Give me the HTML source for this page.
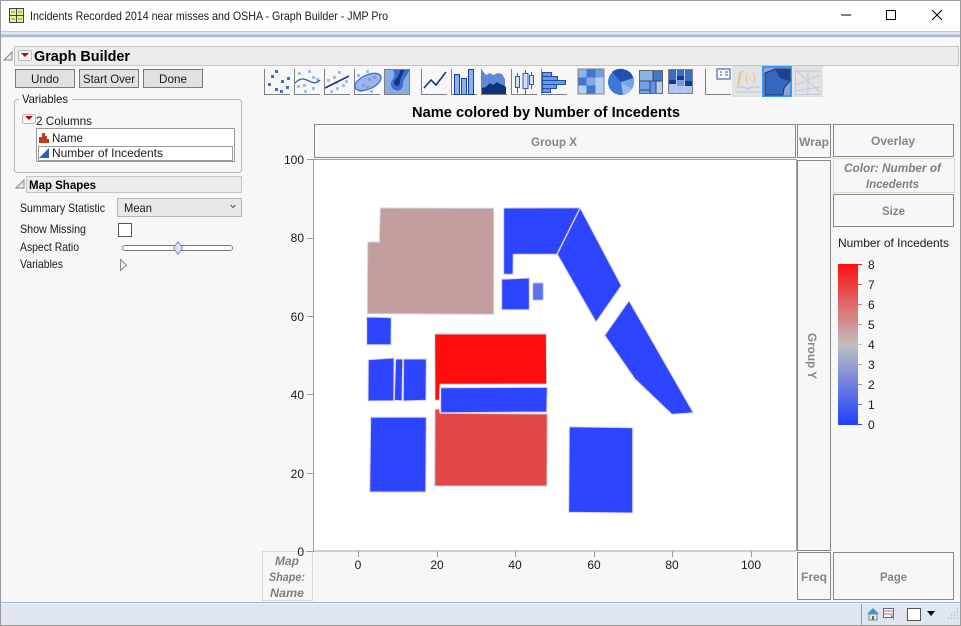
<!DOCTYPE html>
<html><head><meta charset="utf-8"><title>Graph Builder</title>
<style>
html,body{margin:0;padding:0;background:#f7f7f7;width:961px;height:626px;overflow:hidden}
svg{display:block}
text{font-family:"Liberation Sans",sans-serif;font-size:12px;fill:#1a1a1a}
.b{font-weight:bold}
.g{fill:#858585;font-weight:bold}
.gi{fill:#808080;font-weight:bold;font-style:italic}
.box{fill:#f7f7f7;stroke:#888;stroke-width:1}
.bge{fill:#f7f7f7;stroke:#dcdccb;stroke-width:1}
.btn{fill:#e1e1e1;stroke:#7a7a7a;stroke-width:1}
.ax{stroke:#8a8a8a;stroke-width:1;fill:none}
.s{stroke:#d6d6e2;stroke-width:1}
.bl{fill:#2e45ff}
</style></head><body>
<svg width="961" height="626" viewBox="0 0 961 626" xmlns="http://www.w3.org/2000/svg">
<rect width="961" height="626" fill="#f7f7f7"/>
<!-- title bar -->
<rect x="0" y="1" width="961" height="30" fill="#fff"/>
<rect x="0" y="31" width="961" height="1" fill="#bccbdc"/>
<rect x="0" y="32" width="961" height="2" fill="#dfe7f0"/>
<rect x="0" y="34" width="961" height="1" fill="#c5d3e2"/>
<rect x="0" y="35" width="961" height="2" fill="#a9bdd2"/>
<rect x="0" y="37" width="961" height="1" fill="#e6ecf2"/>
<rect x="9.500" y="8.500" width="14" height="14" fill="#e6ec9a" stroke="#444"/>
<path d="M16.500 8v15M9 15.500h15" stroke="#444" fill="none"/>
<path d="M12 11v2M14 11v2M19 11v2M21 11v2M12 18v2M14 18v2M19 18v2M21 18v2" stroke="#7f9a3c" fill="none"/>
<text x="30" y="20" textLength="358" lengthAdjust="spacingAndGlyphs">Incidents Recorded 2014 near misses and OSHA - Graph Builder - JMP Pro</text>
<path d="M841 15h10" stroke="#000" stroke-width="1"/>
<rect x="886.500" y="10.500" width="9" height="9" fill="none" stroke="#000"/>
<path d="M932 10l10 10M942 10l-10 10" stroke="#000" stroke-width="1"/>
<!-- header -->
<rect x="14.500" y="46.500" width="944" height="19" fill="#ececec" stroke="#c4c4c4"/>
<path d="M4 60l8-8v8z" fill="#e8e8e8" stroke="#888"/>
<rect x="18.500" y="50.500" width="13" height="10" rx="2" fill="#f6f6f6" stroke="#b8b8b8"/>
<path d="M21 53h8l-4 4z" fill="#c80000"/>
<text x="34" y="61" class="b" style="font-size:14.500px;fill:#000" textLength="96" lengthAdjust="spacingAndGlyphs">Graph Builder</text>
<!-- buttons -->
<rect class="btn" x="15.500" y="69.500" width="59" height="18"/>
<rect class="btn" x="79.500" y="69.500" width="59" height="18"/>
<rect class="btn" x="143.500" y="69.500" width="59" height="18"/>
<text x="31" y="83" textLength="28" lengthAdjust="spacingAndGlyphs">Undo</text>
<text x="83" y="83" textLength="52" lengthAdjust="spacingAndGlyphs">Start Over</text>
<text x="159" y="83" textLength="28" lengthAdjust="spacingAndGlyphs">Done</text>
<!-- variables -->
<rect x="14.500" y="99.500" width="227" height="73" rx="3" fill="#f7f7f7" stroke="#b5b5b5"/>
<rect x="19" y="95" width="53" height="9" fill="#f7f7f7"/>
<text x="22" y="103" textLength="46" lengthAdjust="spacingAndGlyphs">Variables</text>
<rect x="22.500" y="114.500" width="13" height="9" rx="2" fill="#f6f6f6" stroke="#b8b8b8"/>
<path d="M25 116h8l-4 4z" fill="#c80000"/>
<text x="36" y="125" textLength="56" lengthAdjust="spacingAndGlyphs">2 Columns</text>
<rect x="36.500" y="128.500" width="198" height="33" fill="#fff" stroke="#999"/>
<rect x="38.500" y="146.500" width="194" height="14" fill="none" stroke="#333" stroke-dasharray="1 1" shape-rendering="crispEdges"/>
<path d="M39 143v-6h3v-4h3v3h2v3h2v4z" fill="#c8381c"/>
<text x="52" y="142" textLength="31" lengthAdjust="spacingAndGlyphs">Name</text>
<path d="M39 158l10-10v10z" fill="#2f5fb3"/>
<text x="52" y="157" textLength="111" lengthAdjust="spacingAndGlyphs">Number of Incedents</text>
<!-- map shapes -->
<path d="M16 188l8-8v8z" fill="#e8e8e8" stroke="#888"/>
<rect x="26.500" y="176.500" width="215" height="16" fill="#ececec" stroke="#c4c4c4"/>
<text x="29" y="189" class="b" style="fill:#000" textLength="67" lengthAdjust="spacingAndGlyphs">Map Shapes</text>
<text x="20" y="212" textLength="85" lengthAdjust="spacingAndGlyphs">Summary Statistic</text>
<rect x="117.500" y="198.500" width="124" height="18" fill="#e8e8e8" stroke="#b5b5b5"/>
<text x="124" y="212" textLength="28" lengthAdjust="spacingAndGlyphs">Mean</text>
<path d="M230.500 205l2.500 2.500 2.500-2.500" fill="none" stroke="#555"/>
<text x="20" y="233" textLength="66" lengthAdjust="spacingAndGlyphs">Show Missing</text>
<rect x="118.500" y="223.500" width="13" height="13" fill="#fff" stroke="#555"/>
<text x="20" y="251" textLength="59" lengthAdjust="spacingAndGlyphs">Aspect Ratio</text>
<rect x="122.500" y="245.500" width="110" height="5" rx="2.500" fill="#fff" stroke="#777"/>
<path d="M178 241.500l4.500 6.500-4.500 6.500-4.500-6.500z" fill="#d3e2f3" stroke="#7b96b8"/>
<text x="20" y="268" textLength="43" lengthAdjust="spacingAndGlyphs">Variables</text>
<path d="M120.500 259.500l6 5.500-6 5.500z" fill="#f2f2f2" stroke="#888"/>
<!-- toolbar grey group -->
<rect x="732" y="66" width="91" height="31" fill="#e2e2e2"/>
<!-- axis-L icons -->
<path d="M264.500 69v25.500H290M294.500 69v25.500H320M324.500 69v25.500H350M354.500 69v25.500H380M421.500 69v25.500H447M451.500 69v25.500H477M481.500 69v25.500H507M511.500 69v25.500H537M541.500 69v25.500H567M705.500 69v25.500H731" fill="none" stroke="#808080"/>
<!-- icon 1 -->
<g fill="#3f70c4"><rect x="275" y="70" width="3" height="3"/><rect x="271" y="75" width="3" height="3"/><rect x="268" y="83" width="3" height="3"/><rect x="281" y="80" width="3" height="3"/><rect x="287" y="77" width="3" height="3"/><rect x="275" y="88" width="3" height="3"/><rect x="280" y="90" width="3" height="3"/><rect x="286" y="86" width="3" height="3"/></g>
<!-- icon 2 -->
<g fill="#a6bde4"><rect x="298" y="72" width="3" height="3"/><rect x="308" y="70" width="3" height="3"/><rect x="312" y="76" width="3" height="3"/><rect x="316" y="78" width="3" height="3"/><rect x="297" y="85" width="3" height="3"/><rect x="303" y="84" width="3" height="3"/><rect x="304" y="90" width="3" height="3"/><rect x="312" y="87" width="3" height="3"/></g>
<path d="M295 83c6-6 10-4 14-2s7 3 11-1" fill="none" stroke="#3560ad" stroke-width="1.300"/>
<!-- icon 3 -->
<g fill="#a6bde4"><rect x="327" y="79" width="3" height="3"/><rect x="333" y="76" width="3" height="3"/><rect x="338" y="71" width="3" height="3"/><rect x="335" y="81" width="3" height="3"/><rect x="345" y="80" width="3" height="3"/><rect x="330" y="90" width="3" height="3"/><rect x="336" y="87" width="3" height="3"/><rect x="342" y="84" width="3" height="3"/></g>
<path d="M325 88l24-12" stroke="#0c3a98" stroke-width="1.600" fill="none"/>
<!-- icon 4 -->
<g fill="#a6bde4"><rect x="357" y="74" width="3" height="3"/><rect x="366" y="70" width="3" height="3"/><rect x="359" y="89" width="3" height="3"/><rect x="370" y="90" width="3" height="3"/></g>
<ellipse cx="368" cy="82" rx="14" ry="7" transform="rotate(-25 368 82)" fill="#9bb6ea" stroke="#3f6fd4" stroke-width="1.300"/>
<g fill="#7f9dd8"><rect x="362" y="84" width="3" height="3"/><rect x="368" y="78" width="3" height="3"/><rect x="373" y="76" width="3" height="3"/><rect x="366" y="86" width="3" height="3"/></g>
<!-- icon 5 -->
<rect x="384.500" y="69.500" width="25" height="25" fill="#86ace9" stroke="#808080"/>
<path d="M393 70h16v1c-2 5-6 8-6 13 0 5-4 8-8 6-5-2-5-8-2-11 2-3 2-5 0-9z" fill="#3c6cc8"/>
<path d="M400 70h4c-1 5-4 8-4 12 0 4-3 5-5 3s-1-5 2-7c2-3 3-5 3-8z" fill="#0f3a80"/>
<!-- icon 6 -->
<path d="M424 88l7-8 5 5 10-13" fill="none" stroke="#0d3a9a" stroke-width="1.600"/>
<!-- icon 7 -->
<g fill="#8cb0ee" stroke="#173f9f"><rect x="454.500" y="74.500" width="5" height="20"/><rect x="461.500" y="78.500" width="5" height="16"/><rect x="468.500" y="69.500" width="5" height="25"/></g>
<!-- icon 8 -->
<path d="M482 70l4 5 4-2 3 2 5-2 4 1 3 5v15h-23z" fill="#5f8bd3"/>
<path d="M482 88l4-1 4-4 3 2 4-3 3 2 3 1 3 2v7h-24z" fill="#0d337f"/>
<!-- icon 9 -->
<g fill="#cfe0fa" stroke="#355ca8"><path d="M517.500 73v20M525.500 70v24M531.500 72v17" fill="none"/><rect x="515.500" y="76.500" width="4" height="11"/><rect x="523" y="73.500" width="5" height="15"/><rect x="529.500" y="75.500" width="4" height="9"/></g>
<!-- icon 10 -->
<g fill="#6a99e6" stroke="#204ea8"><rect x="542.500" y="72.500" width="9" height="4"/><rect x="542.500" y="76.500" width="15" height="4"/><rect x="542.500" y="80.500" width="23" height="4"/><rect x="542.500" y="84.500" width="14" height="4"/><rect x="542.500" y="88.500" width="8" height="4"/></g>
<!-- icon 11 -->
<rect x="578" y="69" width="26" height="25" fill="#6f9ce0" stroke="#808080"/>
<rect x="578.500" y="69.500" width="8" height="8" fill="#8eb0e8"/><rect x="586.500" y="69.500" width="9" height="8" fill="#3f76cf"/><rect x="578.500" y="77.500" width="8" height="8" fill="#3f76cf"/><rect x="586.500" y="77.500" width="9" height="8" fill="#85a8e6"/><rect x="595.500" y="77.500" width="8" height="8" fill="#b5cdf5"/><rect x="578.500" y="85.500" width="8" height="8" fill="#b5cdf5"/><rect x="586.500" y="85.500" width="9" height="8" fill="#3f76cf"/><rect x="595.500" y="85.500" width="8" height="8" fill="#b5cdf5"/>
<!-- icon 12 -->
<circle cx="621" cy="82" r="13" fill="#3b78d8"/>
<path d="M621 82l4-12.400a13 13 0 0 1 8.500 8.500z" fill="#1f51b0"/>
<path d="M612 72a13 13 0 0 1 13-2.400l-4 12.400z" fill="#1f51b0"/>
<path d="M621 82l12.500-4a13 13 0 0 1-1.500 11z" fill="#6fa7e4"/>
<path d="M621 82l11 7a13 13 0 0 1-9 6z" fill="#95bdf0"/>
<!-- icon 13 -->
<rect x="639.500" y="70.500" width="23" height="23" fill="#8fb0e8" stroke="#666"/>
<rect x="653" y="71" width="9" height="10" fill="#3b78d8"/>
<rect x="640" y="81" width="10" height="12" fill="#6fa3f0"/><rect x="650" y="81" width="6" height="12" fill="#5f95ec"/><rect x="656" y="81" width="6" height="12" fill="#b5cdf5"/>
<path d="M640 81h22M653 71v10M650 81v12M656 81v12M640 90h10" stroke="#444" fill="none"/>
<!-- icon 14 -->
<rect x="668.500" y="69.500" width="24" height="24" fill="#a9c5f3" stroke="#808080"/>
<rect x="669" y="70" width="7" height="10" fill="#3570c8"/><rect x="669" y="80" width="7" height="4" fill="#0f3a9a"/>
<rect x="677" y="70" width="7" height="6" fill="#3570c8"/><rect x="677" y="76" width="7" height="4" fill="#0f3a9a"/><rect x="677" y="80" width="7" height="6" fill="#6e9ae2"/>
<rect x="685" y="70" width="7" height="12" fill="#3570c8"/><rect x="685" y="81" width="7" height="5" fill="#0f3a9a"/>
<path d="M676.500 70v23M684.500 70v23" stroke="#ccd" fill="none"/>
<!-- icon 15 -->
<rect x="717" y="69" width="13" height="10" fill="#fff" stroke="#2848a8"/>
<path d="M720 72h2M720 75h2M725 72h3M725 75h3" stroke="#2848a8" fill="none"/>
<!-- icon 16 -->
<text x="737" y="82" style="font-family:'Liberation Serif',serif;font-size:16px;font-style:italic;fill:#dcc98e;font-weight:bold">f</text>
<text x="745" y="81" style="font-size:11px;fill:#dcc98e">(·)</text>
<path d="M736 88c5-4 9 2 14 0s7-1 10 0M736 92h25" fill="none" stroke="#b5c5d8"/>
<!-- icon 17 -->
<rect x="762" y="66" width="30" height="31" fill="#39f"/>
<rect x="764" y="68" width="26" height="27" fill="#8ea6cf"/>
<path d="M765 73l10-4h15v12l-6 7-1 7h-18z" fill="#3767bb" stroke="#1d3672" stroke-width="1"/>
<path d="M775 69h15v12l-10-3z" fill="#1c4295"/>
<!-- icon 18 -->
<path d="M795.500 69v25.500H821M796 70l24 22M796 85l24-10M796 91l24-4M808 70v24M796 71h25" fill="none" stroke="#bccadf"/>
<!-- title -->
<text x="412" y="117" class="b" style="font-size:14.500px;fill:#000" textLength="268" lengthAdjust="spacingAndGlyphs">Name colored by Number of Incedents</text>
<!-- drop zones -->
<rect class="box" x="314.500" y="124.500" width="481" height="33"/>
<text x="531" y="146" class="g" textLength="46" lengthAdjust="spacingAndGlyphs">Group X</text>
<rect class="box" x="797.500" y="124.500" width="33" height="33"/>
<text x="799" y="146" class="g" textLength="30" lengthAdjust="spacingAndGlyphs">Wrap</text>
<rect class="box" x="833.500" y="124.500" width="120" height="32"/>
<text x="871" y="145" class="g" textLength="44" lengthAdjust="spacingAndGlyphs">Overlay</text>
<rect class="bge" x="833.500" y="158.500" width="121" height="34"/>
<text x="844" y="172" class="gi" textLength="97" lengthAdjust="spacingAndGlyphs">Color: Number of</text>
<text x="866" y="188" class="gi" textLength="53" lengthAdjust="spacingAndGlyphs">Incedents</text>
<rect class="box" x="833.500" y="194.500" width="120" height="32"/>
<text x="882" y="215" class="g" textLength="23" lengthAdjust="spacingAndGlyphs">Size</text>
<rect class="box" x="797.500" y="160.500" width="33" height="390"/>
<text transform="translate(808,333) rotate(90)" class="g" textLength="46" lengthAdjust="spacingAndGlyphs">Group Y</text>
<rect class="box" x="797.500" y="552.500" width="33" height="47"/>
<text x="801" y="581" class="g" textLength="26" lengthAdjust="spacingAndGlyphs">Freq</text>
<rect class="box" x="833.500" y="552.500" width="120" height="47"/>
<text x="880" y="581" class="g" textLength="27" lengthAdjust="spacingAndGlyphs">Page</text>
<rect class="bge" x="262.500" y="551.500" width="50" height="49"/>
<text x="275" y="565" class="gi" textLength="24" lengthAdjust="spacingAndGlyphs">Map</text>
<text x="269" y="581" class="gi" textLength="36" lengthAdjust="spacingAndGlyphs">Shape:</text>
<text x="270" y="597" class="gi" textLength="34" lengthAdjust="spacingAndGlyphs">Name</text>
<!-- plot -->
<rect x="314" y="160" width="482" height="390" fill="#fff"/>
<path d="M313.500 159v392H796M314 159.500h482M796.500 159v392" fill="none" stroke="#a0a0a0"/>
<path d="M307 159.500h7M307 238.500h7M307 316.500h7M307 394.500h7M307 473.500h7M307 551.500h7M358.500 551v6M437.500 551v6M515.500 551v6M594.500 551v6M672.500 551v6M751.500 551v6" stroke="#999" fill="none"/>
<g text-anchor="end">
<text x="304" y="164">100</text><text x="304" y="242">80</text><text x="304" y="321">60</text><text x="304" y="399">40</text><text x="304" y="478">20</text><text x="304" y="556">0</text>
</g>
<g text-anchor="middle">
<text x="358" y="569">0</text><text x="437" y="569">20</text><text x="515" y="569">40</text><text x="594" y="569">60</text><text x="672" y="569">80</text><text x="751" y="569">100</text>
</g>
<!-- shapes -->
<polygon class="s" fill="#c29e9e" points="380.300,208 493.700,208.300 493.700,314.300 367.300,313.700 367.700,242 379.300,242"/>
<polygon class="s bl" points="503.700,208 580,207.800 556.700,254.300 513.300,254.300 513,274.300 503.700,274.300"/>
<polygon class="s bl" points="501.700,279.300 529.300,278 529.300,309.700 501.700,309.700"/>
<polygon class="s" fill="#6070e8" points="532.700,283 543.300,282.700 543.300,300 532.700,300.300"/>
<polygon class="s bl" points="366.700,317 391.300,317.700 391,344.700 366.700,344.700"/>
<polygon class="s" fill="#ff0d0d" points="434.700,334 546.300,334 546.700,384 440,384.300 439.300,400.300 435,400.300"/>
<polygon class="s bl" points="440.700,387.700 547.300,387.300 546.700,412 440.700,412.700"/>
<polygon class="s" fill="#e24646" points="435,409.300 439.300,409 440,413.300 547.300,414 547,486 434.700,486"/>
<polygon class="s bl" points="368.300,359.700 394,358 393.700,400.700 368,401"/>
<polygon class="s bl" points="395.700,359 402.700,359 402,400.700 394.300,400.300"/>
<polygon class="s bl" points="403.700,359 426.300,359 426,400.300 403.300,401"/>
<polygon class="s bl" points="370.700,417.300 426.300,417.300 425.700,492 369.700,492"/>
<polygon class="s bl" points="580.300,208 621.300,285.700 596,322 557.300,254.300"/>
<polygon class="s bl" points="629,300.700 693.300,412.700 672,414.300 635,379 604.700,335.300"/>
<polygon class="s bl" points="569.300,426.700 632.700,427.700 632.700,513 568.700,512.300"/>
<!-- legend -->
<defs><linearGradient id="lg" x1="0" y1="0" x2="0" y2="1"><stop offset="0" stop-color="#ff1010"/><stop offset=".5" stop-color="#bfbfbf"/><stop offset="1" stop-color="#2040ff"/></linearGradient></defs>
<text x="838" y="247" textLength="111" lengthAdjust="spacingAndGlyphs">Number of Incedents</text>
<rect x="838" y="264" width="20" height="161" fill="url(#lg)"/>
<path d="M858 264.500h4" stroke="#ff1010"/><path d="M858 284.500h4" stroke="#ec4a4a"/><path d="M858 304.500h4" stroke="#d97a7a"/><path d="M858 324.500h4" stroke="#cc9f9f"/><path d="M858 344.500h4" stroke="#c4c4c4"/><path d="M858 364.500h4" stroke="#a4a4d0"/><path d="M858 384.500h4" stroke="#8090dc"/><path d="M858 404.500h4" stroke="#5468ec"/><path d="M858 424.500h4" stroke="#2040ff"/>
<text x="868" y="269">8</text><text x="868" y="289">7</text><text x="868" y="309">6</text><text x="868" y="329">5</text><text x="868" y="349">4</text><text x="868" y="369">3</text><text x="868" y="389">2</text><text x="868" y="409">1</text><text x="868" y="429">0</text>
<!-- status bar -->
<rect x="0" y="602" width="961" height="1" fill="#a3add6"/>
<rect x="0" y="603" width="961" height="1" fill="#f0f3f8"/>
<rect x="0" y="604" width="961" height="21" fill="#e0e6f0"/>
<path d="M861.500 604v21" stroke="#9a9a9a"/>
<path d="M867 614l6-6 6 6z" fill="#3c9ad0"/>
<rect x="869" y="614" width="8" height="6" fill="#f0e8c8" stroke="#3c9ad0"/>
<rect x="872" y="616" width="2" height="4" fill="#8a6a20"/>
<rect x="883.500" y="608.500" width="10" height="9" fill="#fff" stroke="#4a6aa8"/>
<path d="M884 611h9M884 614h9" stroke="#c86060"/>
<path d="M890 615l4 1v4z" fill="#3c9ad0"/>
<rect x="907.500" y="608.500" width="13" height="12" fill="#fff" stroke="#555"/>
<path d="M927 611h8l-4 5z" fill="#000"/>
<path d="M957 609h1M954 612h1M957 612h1M951 615h1M954 615h1M957 615h1M948 618h1M951 618h1M954 618h1M957 618h1" stroke="#aaa"/>
<!-- window border -->
<rect x="0.500" y="0.500" width="960" height="625" fill="none" stroke="#9a9a9a"/>
</svg>
</body></html>
